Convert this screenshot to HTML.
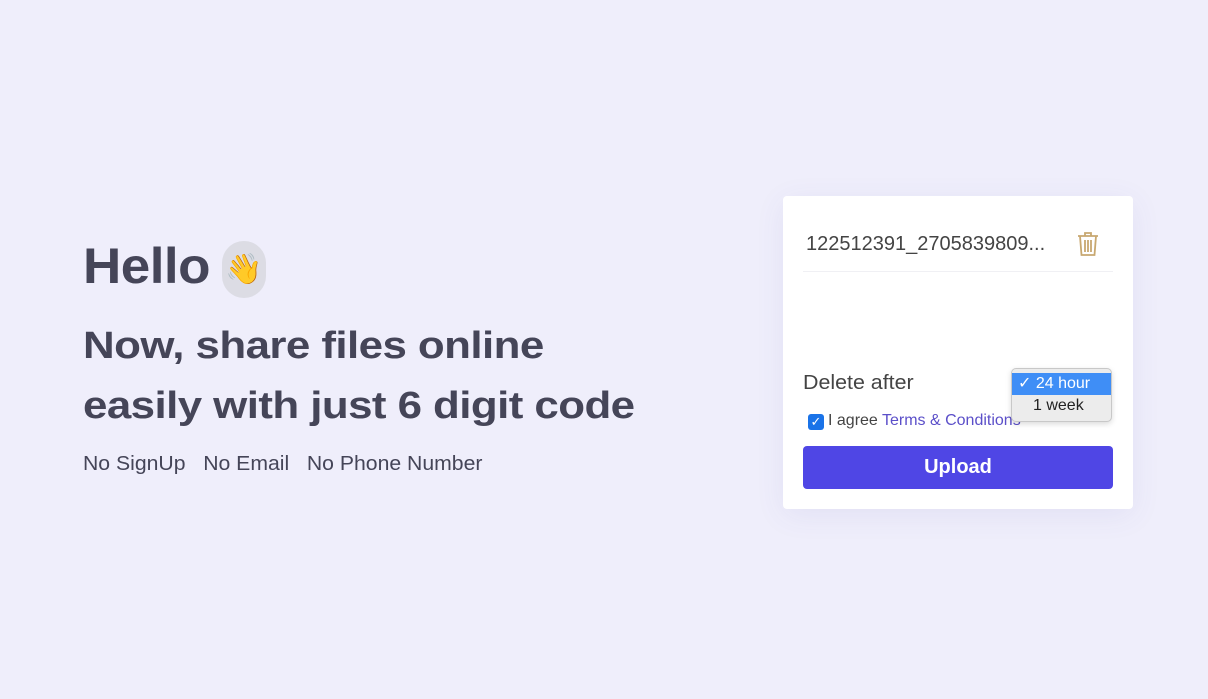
<!DOCTYPE html>
<html><head><style>
*{margin:0;padding:0;box-sizing:border-box}
body{width:1208px;height:699px;background:#efeefb;font-family:"Liberation Sans",sans-serif;color:#454558;position:relative;overflow:hidden}
.a{position:absolute;white-space:nowrap}
h1{font-size:50px;font-weight:bold;letter-spacing:-0.5px}
.sub{font-size:38px;font-weight:bold;letter-spacing:-0.5px;transform:scaleX(1.155);transform-origin:left}
.card{position:absolute;left:783px;top:196px;width:350px;height:313px;background:#fff;border-radius:4px;box-shadow:0 6px 30px rgba(80,80,160,0.08)}
</style></head><body>
<div class="a" style="left:83px;top:237px;transform:scaleX(1.06);transform-origin:left"><h1>Hello</h1></div>
<div class="a" style="left:222px;top:241px;width:44px;height:57px;border-radius:22px;background:#dcdce4;font-size:30px;text-align:center;line-height:57px">👋</div>
<div class="a sub" style="left:83px;top:325px">Now, share files online</div>
<div class="a sub" style="left:83px;top:385px">easily with just 6 digit code</div>
<div class="a" style="left:83px;top:453px;font-size:20px;transform:scaleX(1.06);transform-origin:left">No SignUp&nbsp;&nbsp; No Email&nbsp;&nbsp; No Phone Number</div>
<div class="card">
 <div class="a" style="left:23px;top:37px;font-size:20px;color:#444">122512391_2705839809...</div>
 <svg class="a" style="left:294px;top:35px" width="22" height="26" viewBox="0 0 22 26" fill="none" stroke="#c8a870" stroke-width="1.8"><path d="M1 5h20M8 5V2h6v3M3 5l1.5 19h13L19 5M8 9v12M11 9v12M14 9v12"/></svg>
 <div class="a" style="left:20px;top:75px;width:310px;height:1px;background:#f0f0f4"></div>
 <div class="a" style="left:20px;top:176px;font-size:20px;color:#444;transform:scaleX(1.07);transform-origin:left">Delete after</div>
 <div class="a" style="left:45px;top:216px;font-size:16px;color:#444">I agree <span style="color:#5b4fc9">Terms &amp; Conditions</span></div>
 <div class="a" style="left:228px;top:172px;width:101px;height:54px;background:#ececec;border:1px solid #c8c8c8;border-radius:5px;box-shadow:0 2px 6px rgba(0,0,0,.15);font-size:16px;color:#222">
  <div style="background:#3f8ef6;color:#fff;height:22px;line-height:22px;margin-top:4px;padding-left:6px">✓ 24 hour</div>
  <div style="height:22px;line-height:22px;padding-left:21px">1 week</div>
 </div>
 <div class="a" style="left:25px;top:218px;width:16px;height:16px;background:#1a73e8;border-radius:3px;color:#fff;font-size:13px;line-height:16px;text-align:center">✓</div>
 <div class="a" style="left:20px;top:250px;width:310px;height:43px;background:#4f46e5;border-radius:4px;color:#fff;font-size:20px;font-weight:bold;text-align:center;line-height:43px">Upload</div>
</div>
</body></html>
